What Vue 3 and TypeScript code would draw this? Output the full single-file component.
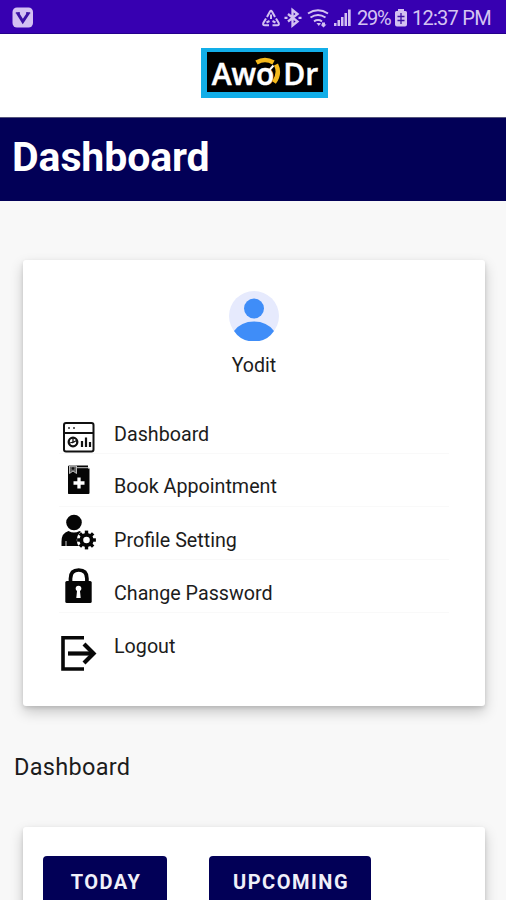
<script setup lang="ts">
type IconName = 'dashboard' | 'book' | 'profile' | 'lock' | 'logout'

interface MenuItem {
  icon: IconName
  label: string
}

const menu: MenuItem[] = [
  { icon: 'dashboard', label: 'Dashboard' },
  { icon: 'book', label: 'Book Appointment' },
  { icon: 'profile', label: 'Profile Setting' },
  { icon: 'lock', label: 'Change Password' },
  { icon: 'logout', label: 'Logout' },
]

const gearTeeth: number[] = [0, 45, 90, 135, 180, 225, 270, 315]
</script>

<template>
  <div class="screen">
    <div class="status">
      <svg class="vbadge" width="22" height="22" viewBox="0 0 22 22">
        <rect x="0.5" y="0.5" width="20.5" height="20" rx="4.500" fill="#d3c0f2" />
        <path d="M5.500 6l5.300 8.500L16.500 6" fill="none" stroke="#3b10a4" stroke-width="3" />
        <path d="M3.800 6h4.200M14 6h4.200" stroke="#3b10a4" stroke-width="1.500" />
      </svg>
      <svg class="indicators" width="92" height="22" viewBox="0 0 92 22">
        <g fill="none" stroke="#d3c1f1" stroke-width="2">
          <path d="M6 10l3-5.500q1-1.500 2 0l3 5.500M5 11.500L2.300 16q-.8 2.300 1.500 2.300H8M15 11.500l2.700 4.500q.8 2.300-1.500 2.300H11.500" />
          <path d="M10 7.500v4.500M5.500 15.500l3-1.500M14.500 15.500l-3-1.500" />
          <path d="M27 7l9.500 7.500-5 4V3l5 4L27 14.500" stroke-width="2.300" />
          <path d="M23.500 10.800h3M37.500 10.800h3" stroke-width="2.300" />
          <path d="M47 6.500q10-6.500 20 0M49.500 10.500q7.500-5 15 0M53 14.300q4-2.500 8 0" />
        </g>
        <path d="M55.500 16h4.500l-2.200 3z M61 15.500h3v2h1.500l-3 3-3-3H61z" fill="#d3c1f1" />
        <g fill="#d3c1f1">
          <rect x="73" y="16" width="2.500" height="3" />
          <rect x="76.500" y="13" width="2.500" height="6" />
          <rect x="80" y="10" width="2.500" height="9" />
          <rect x="83.500" y="6" width="2.500" height="13" />
          <rect x="87" y="2.500" width="2.700" height="16.500" />
        </g>
      </svg>
      <span class="percent">29%</span>
      <svg class="battery" width="14" height="20" viewBox="0 0 14 20">
        <path d="M4 1h6v2h1.500q1.500 0 1.500 1.500v12q0 2-2 2H3q-2 0-2-2v-12Q1 3 2.500 3H4z" fill="#d3c1f1" />
        <path d="M7 5v11M3.500 8.500h7M3.500 12.500h7" stroke="#3b10a4" stroke-width="1.300" />
      </svg>
      <span class="clock">12:37 PM</span>
    </div>

    <header class="brand">
      <div class="logo">
        <span>Aw</span><span class="logo-o">o<svg width="28" height="32" viewBox="0 0 28 32">
          <path d="M2.500 5.500Q11 0.500 19.500 5.500" fill="none" stroke="#f5b91c" stroke-width="4.500" />
          <path d="M22 7.500q4.500 9-2 18" fill="none" stroke="#f5b91c" stroke-width="4.500" />
          <path d="M15.500 13l4-4.500" stroke="#fff" stroke-width="2" />
        </svg></span><span>Dr</span>
      </div>
    </header>

    <div class="banner"><h1>Dashboard</h1></div>

    <main>
      <section class="card account">
        <svg class="avatar" width="50" height="50" viewBox="0 0 50 50">
          <circle cx="25" cy="25" r="25" fill="#e6eafd" />
          <circle cx="25" cy="17.500" r="10" fill="#3f8df8" />
          <path d="M5 40Q12 30.500 25 30.500T45 40Q38 50.500 25 50.500T5 40z" fill="#3f8df8" />
        </svg>
        <div class="name">Yodit</div>
        <nav>
          <a v-for="item in menu" :key="item.icon" class="item">
            <svg width="40" height="60" viewBox="0 0 40 60">
              <g v-if="item.icon === 'dashboard'" fill="none" stroke="#111" stroke-width="2">
                <rect x="5" y="21" width="29.500" height="28.500" rx="2" />
                <path d="M5 31h29.500" />
                <path d="M9 26h2M14 26h2" stroke="#666" stroke-width="1.800" />
                <circle cx="14" cy="40" r="4.300" stroke-width="2.300" />
                <path d="M14 36v4.500l3.500-2M14 40l-3 1" stroke-width="1.300" />
                <path d="M23 45v-6M27 45V35.500M31 45v-5" stroke-width="2.200" />
              </g>
              <g v-else-if="item.icon === 'book'">
                <path d="M9 12.500q0-1 1.500-1H29v3h1.500V39q0 1-1 1H9.500q-.5 0-.5-1z" fill="#050505" />
                <path d="M18 13.700h12" stroke="#ddd" stroke-width="0.900" />
                <path d="M10.500 12h7v7.500l-3.500-2.500-3.500 2.500z" fill="#666" stroke="#ccc" stroke-width="0.900" />
                <circle cx="14" cy="14.500" r="1.300" fill="#111" />
                <path d="M20 23.500v11M14.500 29h11" stroke="#fff" stroke-width="3.300" />
              </g>
              <g v-else-if="item.icon === 'profile'">
                <circle cx="15" cy="15.500" r="7.800" fill="#050505" />
                <path d="M2.500 39V34.500q0-8.500 7-10.500 5.500 3 11 0 3 1 4.500 3.500V39z" fill="#050505" />
                <path d="M7 39v-5" stroke="#fff" stroke-width="0.800" />
                <circle cx="27.500" cy="33" r="9.800" fill="#fff" />
                <g fill="#050505">
                  <rect v-for="a in gearTeeth" :key="a" x="25.800" y="23.600" width="3.400" height="5" :transform="`rotate(${a} 27.500 33)`" />
                </g>
                <circle cx="27.500" cy="33" r="5.200" fill="#fff" stroke="#050505" stroke-width="3.800" />
              </g>
              <g v-else-if="item.icon === 'lock'">
                <path d="M11.500 23v-4.500q0-8.500 8.200-8.500t8.200 8.500V23" fill="none" stroke="#050505" stroke-width="3.700" />
                <rect x="6.300" y="21" width="26.400" height="22" rx="1.500" fill="#050505" />
                <circle cx="19.500" cy="28.500" r="2.800" fill="#fff" />
                <path d="M18.200 29h2.600l.9 9h-4.400z" fill="#fff" />
              </g>
              <g v-else fill="none" stroke="#080808">
                <path d="M25 24.700H4v31.300h21" stroke-width="3.600" />
                <path d="M9 40.500h25" stroke-width="4.200" />
                <path d="M25 31l9.500 9.500L25 50" stroke-width="4.200" />
              </g>
            </svg>
            <span>{{ item.label }}</span>
          </a>
        </nav>
      </section>

      <h2>Dashboard</h2>

      <section class="card tabs">
        <button class="today">TODAY</button>
        <button class="upcoming">UPCOMING</button>
      </section>
    </main>
  </div>
</template>

<style>
body {
  margin: 0;
  background: #f8f8f8;
}
</style>

<style scoped>
.screen {
  width: 506px;
  height: 900px;
  overflow: hidden;
  background: #f8f8f8;
  font-family: Roboto, "Liberation Sans", sans-serif;
  color: #1c1c1c;
}
.status {
  box-sizing: border-box;
  height: 34px;
  padding: 0 15px 0 12px;
  display: flex;
  align-items: center;
  background: #3700b1;
  border-bottom: 1px solid #24008c;
  color: #d5c4f2;
  font-size: 20px;
  line-height: 34px;
  white-space: nowrap;
}
.vbadge {
  margin-top: 2px;
}
.indicators {
  margin: 3px 4px 0 auto;
}
.percent {
  width: 35px;
  margin-top: 3px;
  letter-spacing: -1.2px;
}
.battery {
  margin: 2px 4px 0 2px;
}
.clock {
  width: 79px;
  margin-top: 3px;
  letter-spacing: -0.75px;
}
.brand {
  height: 83px;
  display: flex;
  justify-content: center;
  align-items: flex-start;
  background: #fff;
}
.logo {
  box-sizing: border-box;
  width: 127px;
  height: 50px;
  margin: 14px 0 0 23px;
  border: solid #12aee8;
  border-width: 4px 5px 6px 6px;
  background: #000;
  color: #fff;
  display: flex;
  justify-content: center;
  font: 600 30px/43px "Open Sans", sans-serif;
  -webkit-text-stroke: 0.5px #fff;
}
.logo-o {
  position: relative;
  margin-right: 9px;
}
.logo-o svg {
  position: absolute;
  left: -2px;
  top: 5px;
}
.banner {
  box-sizing: border-box;
  height: 84px;
  padding: 0 12px;
  background: #020057;
  border-top: 1px solid #55557c;
}
h1 {
  margin: 0;
  color: #fff;
  font-size: 41px;
  line-height: 78px;
  font-weight: 700;
  letter-spacing: -0.1px;
}
main {
  padding: 59px 21px 0 23px;
}
.card {
  box-sizing: border-box;
  background: #fff;
  border-radius: 3px;
  box-shadow: 0 6px 14px rgba(0, 0, 0, 0.2), 0 2px 4px rgba(0, 0, 0, 0.12);
}
.account {
  height: 446px;
  padding-top: 31px;
  display: flex;
  flex-direction: column;
  align-items: center;
}
.avatar {
  flex: none;
}
.name {
  height: 61px;
  line-height: 50px;
  font-size: 19.6px;
}
nav {
  width: 390px;
  display: grid;
  grid-template-rows: 52px 53px 53px 53px 60px;
}
.item {
  box-sizing: border-box;
  display: flex;
  border-bottom: 1px solid #f9f9f9;
  font-size: 19.7px;
}
.item:last-child {
  border: 0;
}
.item svg {
  flex: none;
  margin-right: 15px;
}
.item span {
  padding-top: 20px;
  line-height: 25px;
}
.item:nth-child(n + 3) span {
  padding-top: 21px;
}
h2 {
  margin: 0 0 0 -9px;
  height: 121px;
  line-height: 123px;
  font-size: 23.5px;
  font-weight: 400;
  letter-spacing: 0.3px;
}
.tabs {
  height: 200px;
  padding: 29px 20px;
  display: flex;
  align-items: flex-start;
  gap: 42px;
}
button {
  height: 60px;
  padding: 0 0 8px 2px;
  border: 0;
  border-radius: 4px;
  background: #020057;
  color: #f0f0fa;
  font: 700 20px/52px Roboto, sans-serif;
  letter-spacing: 1.5px;
}
.today {
  width: 124px;
}
.upcoming {
  width: 162px;
}
</style>
